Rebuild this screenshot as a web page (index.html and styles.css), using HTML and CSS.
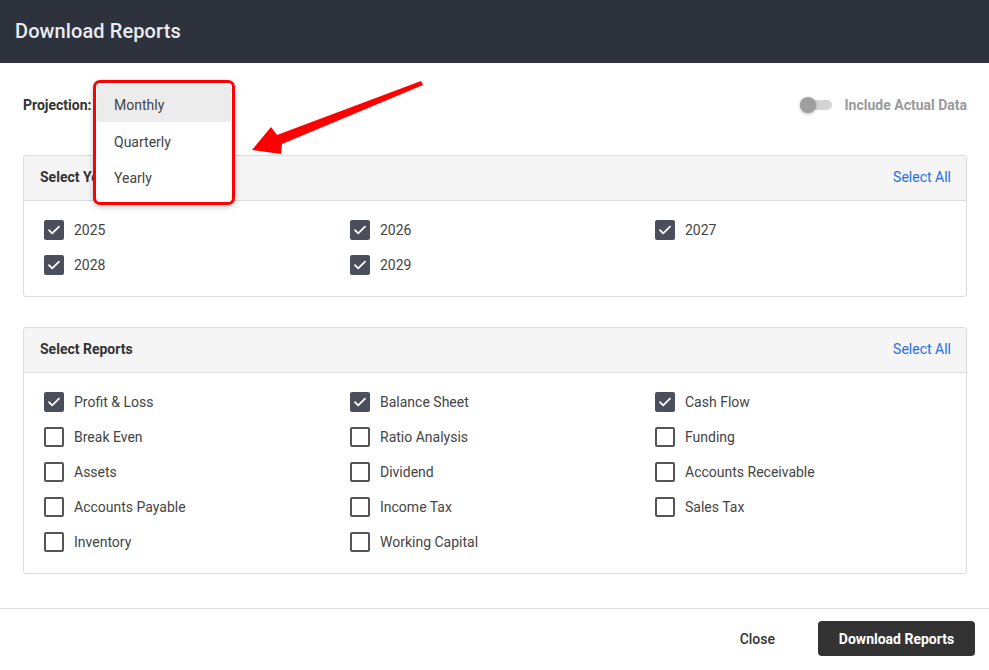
FILE: index.html
```html
<!DOCTYPE html>
<html>
<head>
<meta charset="utf-8">
<link rel="stylesheet" href="styles.css">
</head>
<body>
<div class="modal">
  <div class="header"><h1 class="title">Download Reports</h1></div>
  <div class="content">
    <div class="proj-row">
      <span class="proj-label">Projection:</span>
      <div class="toggle-wrap">
        <span class="toggle"><span class="knob"></span></span>
        <span class="toggle-label">Include Actual Data</span>
      </div>
    </div>

    <div class="card">
      <div class="card-head"><span class="card-title">Select Years</span><span class="select-all">Select All</span></div>
      <div class="grid">
        <label class="item"><span class="cb on"><svg viewBox="0 0 20 20"><path d="M5 10.2l3.2 3.2L15 6.6" /></svg></span>2025</label>
        <label class="item"><span class="cb on"><svg viewBox="0 0 20 20"><path d="M5 10.2l3.2 3.2L15 6.6" /></svg></span>2026</label>
        <label class="item"><span class="cb on"><svg viewBox="0 0 20 20"><path d="M5 10.2l3.2 3.2L15 6.6" /></svg></span>2027</label>
        <label class="item"><span class="cb on"><svg viewBox="0 0 20 20"><path d="M5 10.2l3.2 3.2L15 6.6" /></svg></span>2028</label>
        <label class="item"><span class="cb on"><svg viewBox="0 0 20 20"><path d="M5 10.2l3.2 3.2L15 6.6" /></svg></span>2029</label>
      </div>
    </div>

    <div class="card card2">
      <div class="card-head"><span class="card-title">Select Reports</span><span class="select-all">Select All</span></div>
      <div class="grid">
        <label class="item"><span class="cb on"><svg viewBox="0 0 20 20"><path d="M5 10.2l3.2 3.2L15 6.6" /></svg></span>Profit &amp; Loss</label>
        <label class="item"><span class="cb on"><svg viewBox="0 0 20 20"><path d="M5 10.2l3.2 3.2L15 6.6" /></svg></span>Balance Sheet</label>
        <label class="item"><span class="cb on"><svg viewBox="0 0 20 20"><path d="M5 10.2l3.2 3.2L15 6.6" /></svg></span>Cash Flow</label>
        <label class="item"><span class="cb"></span>Break Even</label>
        <label class="item"><span class="cb"></span>Ratio Analysis</label>
        <label class="item"><span class="cb"></span>Funding</label>
        <label class="item"><span class="cb"></span>Assets</label>
        <label class="item"><span class="cb"></span>Dividend</label>
        <label class="item"><span class="cb"></span>Accounts Receivable</label>
        <label class="item"><span class="cb"></span>Accounts Payable</label>
        <label class="item"><span class="cb"></span>Income Tax</label>
        <label class="item"><span class="cb"></span>Sales Tax</label>
        <label class="item"><span class="cb"></span>Inventory</label>
        <label class="item"><span class="cb"></span>Working Capital</label>
      </div>
    </div>
  </div>
  <div class="footer">
    <button class="btn-close">Close</button>
    <button class="btn-primary">Download Reports</button>
  </div>

  <div class="dropdown">
    <div class="menu">
      <div class="opt active">Monthly</div>
      <div class="opt">Quarterly</div>
      <div class="opt">Yearly</div>
    </div>
  </div>

  <svg class="arrow" width="989" height="670" viewBox="0 0 989 670">
    <polygon points="252,150 271,127 277,135 421,81 423,85 282,144 281,154" fill="#f00" />
  </svg>
</div>
</body>
</html>
```

FILE: styles.css
```css
* { box-sizing: border-box; }
html, body { margin: 0; padding: 0; background: #fff; }
body { font-family: Roboto, "Liberation Sans", Arial, sans-serif; color: #444; width: 989px; height: 670px; overflow: hidden; }

.modal { position: relative; width: 989px; height: 670px; background: #fff; }

.header { height: 63px; background: #2e323d; display: flex; align-items: center; padding: 0 15px; }
.title { margin: 0; font-size: 20px; font-weight: 500; color: #e9ecf2; letter-spacing: 0.1px; padding-bottom: 1px; }

.content { padding: 0 22px 0 23px; }

.proj-row { display: flex; align-items: center; justify-content: space-between; height: 24px; margin-top: 30px; margin-bottom: 38px; }
.proj-label { font-size: 14px; font-weight: 700; color: #333; }
.toggle-wrap { display: flex; align-items: center; }
.toggle { position: relative; width: 32px; height: 10px; border-radius: 5px; background: #d4d4d4; margin-right: 13px; }
.knob { position: absolute; left: 0; top: -3px; width: 16px; height: 16px; border-radius: 50%; background: #9e9e9e; box-shadow: 0 1px 3px rgba(0,0,0,0.3); }
.toggle-label { font-size: 14px; font-weight: 700; color: #9a9a9a; }

.card { border: 1px solid #dcdcdc; border-radius: 3px; }
.card2 { margin-top: 30px; }
.card-head { height: 45px; background: #f5f5f5; border-bottom: 1px solid #dcdcdc; display: flex; align-items: center; justify-content: space-between; padding: 0 15px 2px 16px; border-radius: 3px 3px 0 0; }
.card-title { font-size: 14px; font-weight: 700; color: #333; }
.select-all { font-size: 14px; color: #1f6fe5; }

.grid { display: grid; grid-template-columns: 306px 305px 1fr; row-gap: 15px; padding: 19px 20px 21px 20px; }
.item { display: flex; align-items: center; height: 20px; font-size: 14px; color: #444; }
.cb { width: 20px; height: 20px; border: 2px solid #555; border-radius: 2px; margin-right: 10px; flex: none; display: flex; align-items: center; justify-content: center; }
.cb.on { background: #4b4f5c; border-color: #4b4f5c; }
.cb svg { width: 20px; height: 20px; flex: none; }
.cb svg path { fill: none; stroke: #fff; stroke-width: 1.8; stroke-linecap: round; stroke-linejoin: round; }

.footer { position: absolute; left: 0; right: 0; top: 608px; height: 62px; border-top: 1px solid #e0e0e0; display: flex; align-items: center; justify-content: flex-end; padding: 0 14px 2px 0; }
.btn-close { border: none; background: none; font-family: inherit; font-size: 14px; font-weight: 500; color: #333; padding: 0 20px; height: 35px; margin-right: 23px; }
.btn-primary { border: none; background: #333; color: #fff; font-family: inherit; font-size: 14px; font-weight: 700; height: 35px; width: 157px; border-radius: 4px; }

.dropdown { position: absolute; left: 93px; top: 80px; width: 142px; height: 125px; border: 3px solid #f00; border-radius: 7px; padding: 1px; box-shadow: 0 2px 6px rgba(0,0,0,0.2); background: #fff; }
.menu { background: #fff; padding-top: 1px; }
.opt { height: 36px; display: flex; align-items: center; padding: 3px 0 0 17px; font-size: 14px; color: #444; }
.opt.active { background: #ececec; height: 37px; }

.arrow { position: absolute; left: 0; top: 0; pointer-events: none; }
```
